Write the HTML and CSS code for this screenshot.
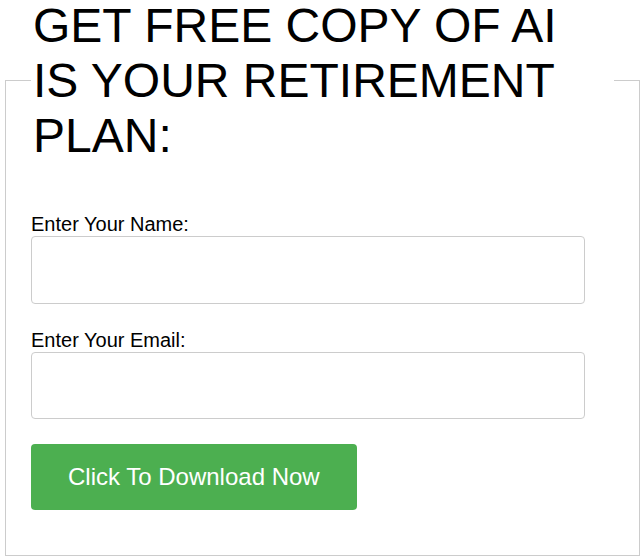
FILE: index.html
```html
<!DOCTYPE html>
<html lang="en">
<head>
    <meta charset="UTF-8">
    <meta name="viewport" content="width=device-width, initial-scale=1.0">
    <title>Free Copy</title>
    <link rel="stylesheet" href="styles.css">
</head>
<body>

<form class="signup" onsubmit="return false;">
    <fieldset class="signup-box">
        <legend class="signup-title">GET FREE COPY OF AI IS YOUR RETIREMENT PLAN:</legend>

        <div class="field">
            <label for="name">Enter Your Name:</label>
            <input type="text" id="name" name="name">
        </div>

        <div class="field">
            <label for="email">Enter Your Email:</label>
            <input type="email" id="email" name="email">
        </div>

        <button type="submit" class="download-btn">Click To Download Now</button>
    </fieldset>
</form>

</body>
</html>
```

FILE: styles.css
```css
body, html {
    margin: 0;
    padding: 0;
    background-color: white;
    color: black;
    font-family: "Liberation Sans", Arial, sans-serif;
}

.signup {
    margin: 0;
}

.signup-box {
    margin: -2px 1px 0 5px;
    padding: 25px 25px 45px 25px;
    border: 1px solid #ccc;
    min-width: 0;
}

.signup-title {
    font-size: 48px;
    padding: 0 2px;
}

.field {
    margin-top: 25px;
}

.field label {
    display: block;
    font-size: 20px;
}

.field input {
    display: block;
    box-sizing: border-box;
    width: 95%;
    height: 67.5px;
    margin: 0;
    padding: 12px;
    font-size: 20px;
    border: 1px solid #ccc;
    border-radius: 4px;
}

.download-btn {
    display: block;
    margin-top: 25px;
    padding: 19px 37px;
    line-height: 28px;
    background: #4CAF50;
    color: white;
    border: none;
    border-radius: 4px;
    font-family: "Liberation Sans", Arial, sans-serif;
    font-size: 24px;
    cursor: pointer;
}
```
